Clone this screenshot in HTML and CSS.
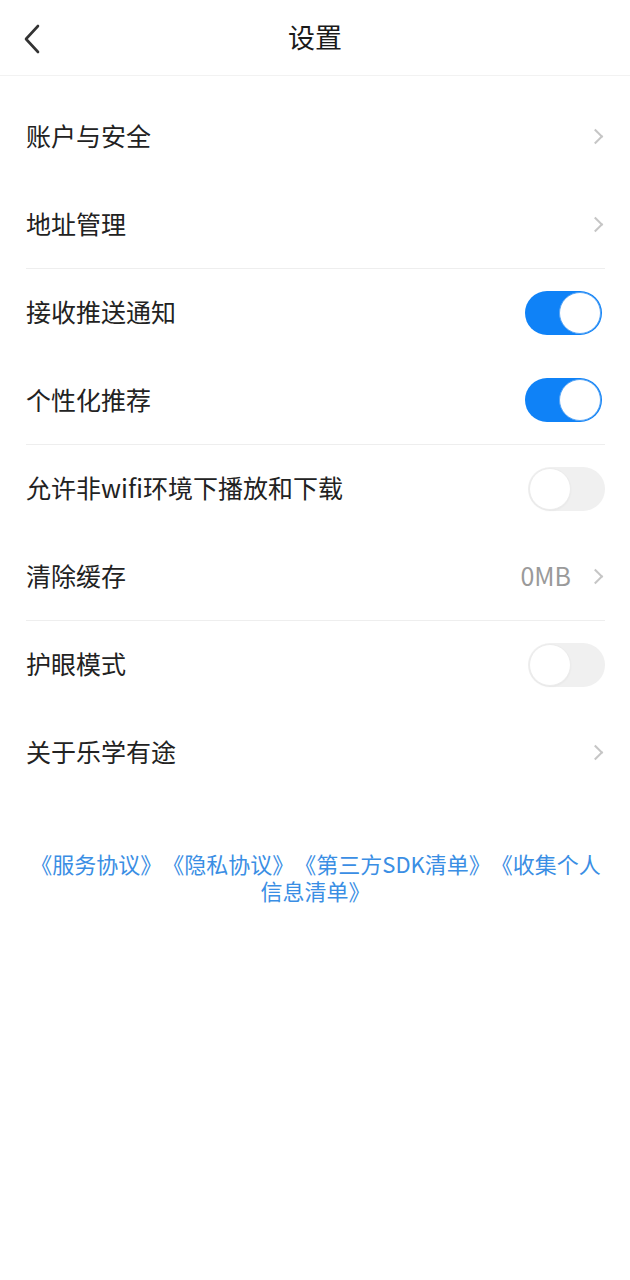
FILE: index.html
```html
<!DOCTYPE html>
<html lang="zh-CN">
<head>
<meta charset="utf-8">
<title>设置</title>
<link rel="stylesheet" href="styles.css">
</head>
<body>
<div class="page">
  <header class="header">
    <span class="back">
      <svg width="18" height="30" viewBox="0 0 18 30"><path d="M15 2 L3 15 L15 28" fill="none" stroke="#333" stroke-width="2.6" stroke-linecap="round" stroke-linejoin="round"/></svg>
    </span>
    <h1 class="title">设置</h1>
  </header>
  <main class="list">
    <div class="group">
      <div class="row"><span class="label">账户与安全</span><span class="right"><span class="chev"></span></span></div>
      <div class="row"><span class="label">地址管理</span><span class="right"><span class="chev"></span></span></div>
    </div>
    <div class="group">
      <div class="row"><span class="label">接收推送通知</span><span class="toggle on"><span class="knob"></span></span></div>
      <div class="row"><span class="label">个性化推荐</span><span class="toggle on"><span class="knob"></span></span></div>
    </div>
    <div class="group">
      <div class="row"><span class="label">允许非wifi环境下播放和下载</span><span class="toggle off"><span class="knob"></span></span></div>
      <div class="row"><span class="label">清除缓存</span><span class="right"><span class="value">0MB</span><span class="chev"></span></span></div>
    </div>
    <div class="group">
      <div class="row"><span class="label">护眼模式</span><span class="toggle off"><span class="knob"></span></span></div>
      <div class="row"><span class="label">关于乐学有途</span><span class="right"><span class="chev"></span></span></div>
    </div>
  </main>
  <footer class="links">《服务协议》《隐私协议》《第三方SDK清单》《收集个人信息清单》</footer>
</div>
</body>
</html>
```

FILE: styles.css
```css
* { box-sizing: border-box; }
html, body {
  margin: 0;
  padding: 0;
  background: #fff;
}
body {
  font-family: "Noto Sans CJK SC", "Noto Sans", sans-serif;
  color: #222;
}
.page {
  width: 630px;
  min-height: 1280px;
  background: #fff;
}
.header {
  height: 76px;
  border-bottom: 1px solid #f2f2f2;
  display: flex;
  align-items: center;
  justify-content: center;
  position: relative;
}
.back {
  position: absolute;
  left: 23px;
  top: 24px;
  width: 18px;
  height: 30px;
  display: flex;
}
.title {
  margin: 0;
  font-size: 27px;
  font-weight: 400;
  color: #1a1a1a;
  line-height: 1;
  margin-top: -2px;
}
.list {
  padding: 17px 25px 0 26px;
}
.group {
  border-bottom: 1px solid #eeeeee;
}
.group:last-child {
  border-bottom: none;
}
.row {
  height: 87.5px;
  display: flex;
  align-items: center;
  justify-content: space-between;
}
.label {
  font-size: 25px;
  color: #222;
  line-height: 1;
  margin-top: -2px;
}
.right {
  display: flex;
  align-items: center;
  gap: 19px;
}
.value {
  font-size: 25px;
  color: #9a9a9a;
  line-height: 1;
  margin-top: -2px;
}
.chev {
  width: 11px;
  height: 11px;
  border-top: 2px solid #c6c6c6;
  border-right: 2px solid #c6c6c6;
  transform: rotate(45deg);
  margin-right: 4px;
}
.toggle {
  width: 77px;
  height: 44px;
  border-radius: 22px;
  display: flex;
  align-items: center;
  padding: 1px;
}
.toggle.on {
  background: #0f82f7;
  justify-content: flex-end;
  margin-right: 3px;
}
.toggle.off {
  background: #f0f0f0;
  justify-content: flex-start;
}
.knob {
  width: 42px;
  height: 42px;
  border-radius: 50%;
  background: #fff;
}
.toggle.on .knob {
  border: 1px solid #5aa6f5;
}
.toggle.off .knob {
  border: 1px solid #ececec;
  box-shadow: 0 1px 2px rgba(0,0,0,0.04);
}
.links {
  margin: 54px 25px 0 26px;
  text-align: center;
  font-size: 22px;
  line-height: 27px;
  color: #3a8ee4;
  text-spacing-trim: space-all;
}
```
